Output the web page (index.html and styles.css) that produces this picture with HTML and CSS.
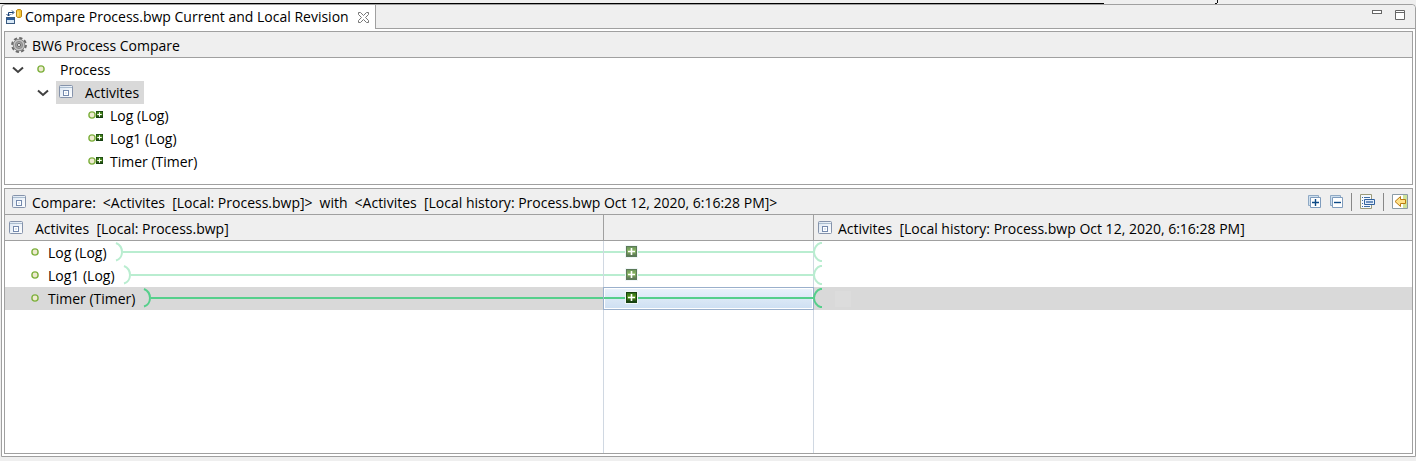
FILE: index.html
```
<!DOCTYPE html>
<html lang="en">
<head>
<meta charset="utf-8">
<title>Compare Process.bwp Current and Local Revision</title>
<link rel="stylesheet" href="styles.css">
</head>
<body>
<svg class="defs" aria-hidden="true">
  <defs>
    <linearGradient id="winFill" x1="0" y1="0" x2="1" y2="1"><stop offset="0" stop-color="#dbe6f2"/><stop offset="1" stop-color="#ffffff"/></linearGradient>
    <linearGradient id="plusFill" x1="0" y1="0" x2="0" y2="1"><stop offset="0" stop-color="#2f6b18"/><stop offset=".45" stop-color="#5a9a1e"/><stop offset="1" stop-color="#12380f"/></linearGradient>
    <symbol id="window" viewBox="0 0 14 13">
      <rect x=".5" y=".5" width="13" height="12" rx="1" fill="url(#winFill)" stroke="#8593ab"/>
      <path d="M1 2.5h12" stroke="#a9bccf"/>
      <rect x="4.5" y="5.5" width="5" height="5" fill="#fff" stroke="#7489ad"/>
      <rect x="6" y="7" width="2" height="2" fill="#dce6f0"/>
    </symbol>
    <symbol id="dot" viewBox="0 0 8 8">
      <circle cx="4" cy="4" r="3.1" fill="#eeead0" stroke="#7fb13f" stroke-width="1.4"/>
    </symbol>
    <symbol id="plus" viewBox="0 0 11 11">
      <rect width="11" height="11" fill="#174312"/>
      <rect x="1" y="1" width="9" height="9" fill="url(#plusFill)"/>
      <path d="M5.5 2v7M2 5.5h7" stroke="#fff" stroke-width="1.6"/>
    </symbol>
    <symbol id="chevron" viewBox="0 0 12 8">
      <path d="M1 1.500 6 6l5-4.500" fill="none" stroke="#404040" stroke-width="2"/>
    </symbol>
    <symbol id="arcEnd" viewBox="0 0 8 20">
      <path d="M1 1c3.500 1.500 6 5 6 9S4.500 17.500 1 18.500" fill="none" stroke="currentColor" stroke-width="2"/>
    </symbol>
    <symbol id="arcStart" viewBox="0 0 9 20">
      <path d="M9 1H7.500C4 2 1 6 1 10s3 8 6.500 9H9" fill="none" stroke="currentColor" stroke-width="2"/>
    </symbol>
  </defs>
</svg>
<div class="topline"><i class="rule"></i><svg class="tail" viewBox="0 0 3 4" aria-hidden="true"><path d="M2.500 0v3M0 3.500h2" fill="none" stroke="#111"/></svg></div>
<main class="editor">
  <header class="tabs">
    <div class="tab">
      <svg class="tab-icon" viewBox="0 0 16 16" aria-hidden="true">
        <path d="M2.500 7V3.500h5M6 1.500l2 2-2 2M.5 5l2 2 2-2" fill="none" stroke="#173f75"/>
        <rect x=".5" y="8.500" width="8" height="6" fill="#d9e9f7" stroke="#39597f"/>
        <path d="M1 10h7" stroke="#2c5c9b" stroke-width="2"/>
        <path d="M10.500 1.500c0-1.300 5-1.300 5 0v6c0 1.300-5 1.300-5 0z" fill="#f6c534" stroke="#b98312"/>
        <path d="M12 2.500v5" stroke="#fff0a8"/>
      </svg>
      <span>Compare Process.bwp Current and Local Revision</span>
      <button class="icon-button close" aria-label="Close tab"><svg viewBox="0 0 11 11"><path d="M.5 .5h2l3 3 3-3h2v2l-3 3 3 3v2h-2l-3-3-3 3h-2v-2l3-3-3-3z" fill="#fff" stroke="#777"/></svg></button>
    </div>
    <div class="tab-space">
      <button class="icon-button" aria-label="Minimize"><svg class="minimize" viewBox="0 0 10 4"><rect x=".5" y=".5" width="9" height="3" fill="#fff" stroke="#666"/></svg></button>
      <button class="icon-button" aria-label="Maximize"><svg class="maximize" viewBox="0 0 10 10"><path d="M.5.5h9v9h-9zM.5 2.500h9" fill="#fff" stroke="#666"/></svg></button>
    </div>
  </header>
  <div class="body">
    <section class="panel structure">
      <h2 class="bar"><svg class="gear" viewBox="0 0 16 16" aria-hidden="true"><circle cx="8" cy="8" r="6.800" fill="none" stroke="#6c6c6c" stroke-width="2.200" stroke-dasharray="3.200 2.140"/><circle cx="8" cy="8" r="5.800" fill="#c4c4c4" stroke="#8a8a8a"/><circle cx="8" cy="8" r="3.600" fill="#a4a4a4" stroke="#8c8c8c"/><circle cx="8" cy="8" r="1.600" fill="#eee" stroke="#666"/></svg>BW6 Process Compare</h2>
      <ul class="tree">
        <li><div class="node"><button class="icon-button twist" aria-label="Collapse Process"><svg><use href="#chevron"/></svg></button><span class="item root"><svg class="dot"><use href="#dot"/></svg>Process</span></div>
          <ul>
            <li><div class="node"><button class="icon-button twist" aria-label="Collapse Activites"><svg><use href="#chevron"/></svg></button><span class="item selected"><svg class="window"><use href="#window"/></svg>Activites</span></div>
              <ul class="leaves">
                <li class="node"><svg class="dot"><use href="#dot"/></svg><svg class="added"><use href="#plus"/></svg>Log (Log)</li>
                <li class="node"><svg class="dot"><use href="#dot"/></svg><svg class="added"><use href="#plus"/></svg>Log1 (Log)</li>
                <li class="node"><svg class="dot"><use href="#dot"/></svg><svg class="added"><use href="#plus"/></svg>Timer (Timer)</li>
              </ul>
            </li>
          </ul>
        </li>
      </ul>
    </section>
    <section class="panel compare">
      <h2 class="bar"><svg class="window"><use href="#window"/></svg><span class="title"><span>Compare:</span> <span>&lt;Activites&nbsp; [Local: Process.bwp]&gt;</span> <span>with</span> <span>&lt;Activites&nbsp; [Local history: Process.bwp Oct 12, 2020, 6:16:28 PM]&gt;</span></span>
        <span class="tools">
          <button class="icon-button" aria-label="Expand all"><svg viewBox="0 0 14 14"><path d="M.5.500h10v10h-10z" fill="#cfe0ef" stroke="#8fa9c4"/><path d="M2.500 2.500h10v10h-10z" fill="#fff" stroke="#7f9cbd"/><path d="M7.500 4v7M4 7.500h7" stroke="#0d4a86" stroke-width="1.400"/></svg></button>
          <button class="icon-button" aria-label="Collapse all"><svg viewBox="0 0 14 14"><path d="M.5.500h10v10h-10z" fill="#cfe0ef" stroke="#8fa9c4"/><path d="M2.500 2.500h10v10h-10z" fill="#fff" stroke="#7f9cbd"/><path d="M4 7.500h7" stroke="#0d4a86" stroke-width="1.400"/></svg></button>
          <i class="sep"></i>
          <button class="icon-button large" aria-label="Group differences"><svg viewBox="0 0 16 16"><path d="M.5.500h11v14H.500z" fill="#f5f9fc" stroke="#9a9a7a"/><path d="M2 3.500h1m1 0h6M2 6.500h1M2 9.500h1M2 12.500h1m1 0h6" stroke="#3f6ea5"/><path d="M4.500 5.500h10v5h-10z" fill="#e3eefa" stroke="#31619d"/><path d="M6 8h7" stroke="#6d91bf" stroke-width="2"/></svg></button>
          <i class="sep"></i>
          <button class="icon-button large" aria-label="Copy from right to left"><svg viewBox="0 0 16 16"><path d="M.5.500h15v14H.500z" fill="#fff" stroke="#8b9ba5"/><path d="M11 1h4v13h-4z" fill="#cfe39a"/><path d="M3 7.500l5.500-5v3h5v4h-5v3z" fill="#ffe28a" stroke="#b97a10"/></svg></button>
        </span>
      </h2>
      <div class="columns">
        <div class="pane left">
          <h3 class="bar"><svg class="window"><use href="#window"/></svg>Activites&nbsp; [Local: Process.bwp]</h3>
          <ul class="rows">
            <li><svg class="dot"><use href="#dot"/></svg>Log (Log)<svg class="arc-end"><use href="#arcEnd"/></svg><i class="line"></i></li>
            <li><svg class="dot"><use href="#dot"/></svg>Log1 (Log)<svg class="arc-end"><use href="#arcEnd"/></svg><i class="line"></i></li>
            <li class="current"><svg class="dot"><use href="#dot"/></svg>Timer (Timer)<svg class="arc-end"><use href="#arcEnd"/></svg><i class="line"></i></li>
          </ul>
        </div>
        <div class="pane middle">
          <h3 class="bar"></h3>
          <ul class="rows">
            <li><i class="line short"></i><button class="icon-button merge" aria-label="Log added"><svg><use href="#plus"/></svg></button><i class="line"></i></li>
            <li><i class="line short"></i><button class="icon-button merge" aria-label="Log1 added"><svg><use href="#plus"/></svg></button><i class="line"></i></li>
            <li class="current"><i class="line short"></i><button class="icon-button merge" aria-label="Timer added"><svg><use href="#plus"/></svg></button><i class="line"></i></li>
          </ul>
        </div>
        <div class="pane right">
          <h3 class="bar"><svg class="window"><use href="#window"/></svg>Activites&nbsp; [Local history: Process.bwp Oct 12, 2020, 6:16:28 PM]</h3>
          <ul class="rows">
            <li><svg class="arc-start"><use href="#arcStart"/></svg></li>
            <li><svg class="arc-start"><use href="#arcStart"/></svg></li>
            <li class="current"><svg class="arc-start"><use href="#arcStart"/></svg><i class="ghost"></i></li>
          </ul>
        </div>
      </div>
    </section>
  </div>
</main>
</body>
</html>
```
FILE: styles.css
```
* { box-sizing: border-box; }

body {
  margin: 0;
  height: 100vh;
  display: flex;
  flex-direction: column;
  padding-bottom: 4px;
  background: #efefef;
  color: #000;
  font: 14px/22px "Open Sans", "Noto Sans", sans-serif;
}

h2, h3 { margin: 0; font: inherit; }
ul { margin: 0; padding: 0; list-style: none; }
svg { display: block; flex: none; }
.defs { position: absolute; width: 0; height: 0; }

.icon-button {
  display: flex;
  flex: none;
  border: 0;
  padding: 0;
  background: none;
}

.topline { display: flex; align-items: flex-end; height: 4px; }
.rule { width: 78%; height: 1px; background: #000; }
.tail { width: 3px; height: 4px; margin-left: 111px; }

.editor {
  flex: 1;
  display: flex;
  flex-direction: column;
  margin-left: 1px;
  border: 1px solid #a0a0a0;
  border-radius: 4px 4px 0 0;
  background: #fff;
}

.tabs { display: flex; height: 24px; }
.tab { display: flex; align-items: center; padding: 0 6px 0 4px; white-space: nowrap; }
.tab-icon { width: 16px; height: 16px; margin-right: 3px; }
.close { margin-left: 9px; }
.close svg { width: 11px; height: 11px; }
.tab-space {
  flex: 1;
  display: flex;
  align-items: flex-start;
  justify-content: flex-end;
  gap: 13px;
  padding: 5px 10px 0 0;
  border: solid #a0a0a0;
  border-width: 0 0 1px 1px;
  border-top-right-radius: 4px;
  background: #efefef;
}
.minimize { width: 10px; height: 4px; }
.maximize { width: 10px; height: 10px; }

.body { flex: 1; display: flex; flex-direction: column; padding: 2px; }
.panel { border: 1px solid #a0a0a0; }
.bar {
  display: flex;
  align-items: center;
  height: 26px;
  border-bottom: 1px solid #a0a0a0;
  background: #efefef;
  white-space: nowrap;
}

.structure { min-height: 154px; }
.structure .bar { padding: 2px 0 0 6px; }
.gear { width: 16px; height: 16px; margin: 0 5px 2px 0; }
.dot { width: 8px; height: 8px; margin-bottom: 2px; }
.window { width: 14px; height: 13px; margin-bottom: 2px; }

.tree ul { padding-left: 25px; }
.node { display: flex; align-items: center; height: 23px; }
.twist { margin: 0 7px 0 7px; }
.twist svg { width: 12px; height: 8px; }
.item { display: flex; align-items: center; height: 23px; padding: 0 5px 0 3px; }
.item .window { margin-right: 12px; }
.item.root { padding-left: 6px; }
.item .dot { margin-right: 15px; }
.selected { background: #d9d9d9; }
.tree .leaves { padding-left: 58px; }
.leaves .added { width: 7px; height: 7px; margin: 0 7px 2px 0; }

.compare { flex: 1; display: flex; flex-direction: column; margin-top: 3px; }
.compare .bar { padding-top: 2px; }
.compare > .bar { padding-left: 7px; }
.title { display: flex; gap: 7px; margin-left: 6px; }
.tools {
  display: flex;
  align-items: center;
  gap: 8px;
  margin: 0 0 2px auto;
  padding-right: 4px;
}
.tools svg { width: 14px; height: 14px; }
.tools .large svg { width: 16px; height: 16px; }
.sep { width: 1px; height: 18px; margin-left: -1px; background: #888; }

.columns { flex: 1; display: grid; grid-template-columns: 1fr 211px 1fr; }
.pane { display: flex; flex-direction: column; min-width: 0; }
.pane .bar { padding-left: 4px; }
.left .window { margin-right: 12px; }
.right .window { margin-right: 6px; }
.middle .bar { border-left: 1px solid #a0a0a0; border-right: 1px solid #a0a0a0; }
.rows { flex: 1; color: #b9edd0; }
.rows li { display: flex; align-items: center; height: 23px; white-space: nowrap; }
.rows .current { background: #d9d9d9; color: #55cf8b; }
.left li { padding-left: 26px; color: #000; }
.left .current { color: #000; }
.left .rows .dot { margin-right: 9px; }
.left .arc-end { color: #b9edd0; }
.left .current .arc-end { color: #55cf8b; }
.arc-end { width: 8px; height: 20px; margin: 0 0 2px 8px; }
.arc-start { width: 9px; height: 20px; margin: 0 0 1px -1px; }
.line { flex: 1; height: 2px; margin-bottom: 2px; background: #b9edd0; }
.current .line { background: #55cf8b; }
.middle .rows { border: solid #d0d8e2; border-width: 0 1px; }
.middle .rows .current {
  margin: 0 -1px;
  border: 1px solid #9ab0cc;
  background: linear-gradient(#eaf2fb, #cddff2);
  box-shadow: inset 0 0 0 1px #fff;
}
.line.short { flex: none; width: 21px; }
.merge { margin: 0 1px 2px; outline: 1px solid #f1f6f8; }
.merge svg { width: 11px; height: 11px; opacity: .7; }
.current .merge svg { opacity: 1; }
.ghost { width: 16px; height: 16px; margin-left: 13px; background: #dcdcdc; }
```
